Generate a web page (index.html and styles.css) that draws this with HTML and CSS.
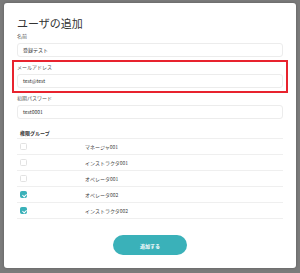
FILE: index.html
```html
<!DOCTYPE html>
<html lang="ja">
<head>
    <meta charset="UTF-8">
    <meta name="viewport" content="width=device-width, initial-scale=1.0">
    <title>ユーザの追加</title>
    <link rel="stylesheet" href="styles.css">
</head>
<body>
    <div class="modal">
        <h1 class="title">ユーザの追加</h1>

        <div class="field">
            <label class="label">名前</label>
            <div class="input">登録テスト</div>
        </div>

        <div class="field highlight">
            <label class="label">メールアドレス</label>
            <div class="input">test@test</div>
        </div>

        <div class="field">
            <label class="label">初期パスワード</label>
            <div class="input">test0001</div>
        </div>

        <div class="groups">
            <div class="group-head">権限グループ</div>
            <div class="row"><span class="check"></span><span class="name">マネージャ001</span></div>
            <div class="row"><span class="check"></span><span class="name">インストラクタ001</span></div>
            <div class="row"><span class="check"></span><span class="name">オペレータ001</span></div>
            <div class="row"><span class="check on"></span><span class="name">オペレータ002</span></div>
            <div class="row"><span class="check on"></span><span class="name">インストラクタ002</span></div>
        </div>

        <div class="actions">
            <button class="submit">追加する</button>
        </div>
    </div>
</body>
</html>
```

FILE: styles.css
```css
* {
    box-sizing: border-box;
}
body {
    margin: 0;
    height: 273px;
    background-color: #7b7b7b;
    font-family: "Noto Sans CJK JP", "Noto Sans", sans-serif;
    overflow: hidden;
}
.modal {
    background: white;
    width: 292px;
    height: 265px;
    margin: 3px 0 0 4px;
    padding: 13px 13px 0 13px;
    border-radius: 3px;
    box-shadow: 0 0 3px rgba(0, 0, 0, 0.25);
}
.title {
    margin: 0;
    font-size: 11px;
    line-height: 14px;
    font-weight: 400;
    color: #333;
}
.field {
    margin-top: 2px;
}
.label {
    display: block;
    font-size: 5px;
    line-height: 8px;
    color: #555;
}
.input {
    margin-top: 3px;
    height: 14px;
    border: 1px solid #ececec;
    border-radius: 3px;
    padding-left: 5px;
    font-size: 5px;
    line-height: 12px;
    color: #333;
}
.highlight {
    margin: 3px -5px 0 -5px;
    padding: 1px 3px 3px 3px;
    border: 2px solid #e8232e;
}
.highlight + .field {
    margin-top: 1px;
}
.groups {
    margin-top: 10px;
}
.group-head {
    height: 10px;
    padding: 0 3px 2px 3px;
    font-size: 5px;
    line-height: 8px;
    font-weight: 700;
    color: #333;
    border-bottom: 1px solid #efefef;
}
.row {
    display: grid;
    grid-template-columns: 65px 1fr;
    align-items: center;
    height: 16px;
    padding: 0 3px;
    border-bottom: 1px solid #efefef;
}
.check {
    width: 7px;
    height: 7px;
    border: 1px solid #e2e2e2;
    border-radius: 1.5px;
    position: relative;
}
.check.on {
    background: #3ab1b9;
    border-color: #3ab1b9;
}
.check.on::after {
    content: "";
    position: absolute;
    left: 1.5px;
    top: 0.5px;
    width: 2px;
    height: 3px;
    border: solid white;
    border-width: 0 1px 1px 0;
    transform: rotate(45deg);
}
.name {
    font-size: 5px;
    line-height: 8px;
    color: #444;
}
.actions {
    display: flex;
    justify-content: center;
    margin-top: 16px;
}
.submit {
    width: 74px;
    height: 20px;
    border: none;
    border-radius: 10px;
    background: #3ab1b9;
    color: white;
    font-family: inherit;
    font-size: 5px;
    font-weight: 700;
    padding: 0;
}
```
